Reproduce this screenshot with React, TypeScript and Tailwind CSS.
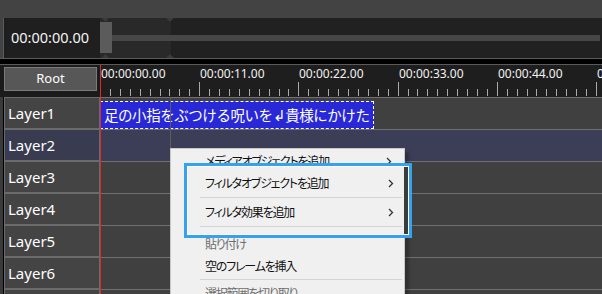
import * as React from "react";

const layers = ["Layer1", "Layer2", "Layer3", "Layer4", "Layer5", "Layer6", "Layer7"];
const labels = ["00:00:00.00", "00:00:11.00", "00:00:22.00", "00:00:33.00", "00:00:44.00", "00:00:55.00"];
const STEP = 99.2;

function Chevron() {
  return (
    <svg width="6" height="9" viewBox="0 0 6 9" className="shrink-0">
      <path d="M1 1 L4.5 4.5 L1 8" fill="none" stroke="#333" strokeWidth="1.3" />
    </svg>
  );
}

function MenuItem({ label, disabled, sub, h = "h-[24px]" }: { label: string; disabled?: boolean; sub?: boolean; h?: string }) {
  return (
    <div className={`flex ${h} items-center justify-between pl-[34px] pr-[12px]`}>
      <span className={disabled ? "text-[#6d6d6d]" : "text-[#111]"}>{label}</span>
      {sub && <Chevron />}
    </div>
  );
}

function TopPanel() {
  return (
    <div className="ml-[3px] flex h-[40px] border-l border-[#5a5a5a] bg-[#1f1f1f]">
      <div className="flex w-[96px] items-center pl-[7px] text-[14.5px] text-[#f4f4f4]">00:00:00.00</div>
      <div className="relative flex flex-1">
        <div className="w-[69px] rounded-r-[4px] bg-[#292929]" />
        <div className="w-[3px] bg-[#1f1f1f]" />
        <div className="flex-1 rounded-l-[4px] bg-[#212121]" />
        <svg className="absolute left-0 top-0" width="80" height="40" viewBox="0 0 80 40">
          <path d="M2 0 H9 L5.5 4 Z M2 40 H9 L5.5 36 Z" fill="#3a3a3a" />
          <path d="M66 0 H74 L70 4 Z M66 40 H74 L70 36 Z" fill="#3a3a3a" />
          <rect x="69.5" y="3" width="1" height="34" fill="#343434" />
        </svg>
        <div className="absolute left-[12px] right-[2px] top-[17px] h-[6px] bg-[#474747]" />
        <div className="absolute left-0 top-[4px] h-[31px] w-[12px] bg-[#5b5b5b]" />
      </div>
    </div>
  );
}

function Ruler() {
  const ticks = Array.from({ length: 51 }, (_, i) => i);
  return (
    <div className="relative flex-1 overflow-hidden bg-[#1e1e1e]">
      <svg className="absolute left-0 top-0" width="502" height="32" viewBox="0 0 502 32">
        {ticks.map((i) => {
          const x = Math.round(i * (STEP / 10)) + 0.5;
          const major = i % 10 === 0;
          return <line key={i} x1={x} x2={x} y1={major ? 17 : 24} y2={31} stroke="#a9a9a9" strokeWidth="1" />;
        })}
      </svg>
      {labels.map((l, i) => (
        <span
          key={l}
          className="absolute top-[2px] whitespace-nowrap text-[12px] leading-[14px] text-[#f2f2f2]"
          style={{ left: Math.round(i * STEP) + 1 }}
        >
          {l}
        </span>
      ))}
    </div>
  );
}

function LayerRow({ name, index }: { name: string; index: number }) {
  const selected = index === 1;
  return (
    <div className="flex h-[32px]">
      <div className="w-[4px] border-r border-black bg-[#3a3a3a]" />
      <div
        className={`flex w-[96px] items-center border border-[#6b6b6b] pl-[3px] text-[15px] text-white ${
          selected ? "bg-[#393c50]" : "bg-[#444444]"
        }`}
      >
        {name}
      </div>
      <div className={`relative flex-1 border-t border-[#707070] ${selected ? "bg-[#3b3e56]" : "bg-[#404040]"}`}>
        {index === 0 && (
          <div className="absolute left-0 top-[3px] flex h-[28px] w-[274px] items-center overflow-hidden whitespace-nowrap border border-dashed border-white bg-[#2828d6] pl-[3px] font-['Noto_Sans_CJK_JP',sans-serif] text-[14.5px] tracking-[-0.45px] text-white">
            足の小指をぶつける呪いを↲貴様にかけた
          </div>
        )}
      </div>
    </div>
  );
}

export default function App() {
  return (
    <div className="relative h-[294px] w-[602px] overflow-hidden bg-[#434343] font-['Noto_Sans','Noto_Sans_CJK_JP',sans-serif]">
      <div className="h-[18px]" />
      <TopPanel />
      <div className="h-[7px] border-y border-[#5a5a5a] bg-black" />
      <div className="flex h-[32px]">
        <div className="w-[100px] bg-[#1b1b1b] pl-[4px] pt-[2px]">
          <div className="flex h-[24px] w-[93px] items-center justify-center border border-[#7a7a7a] bg-[#575757] text-[13px] text-white">
            Root
          </div>
        </div>
        <Ruler />
      </div>
      {layers.map((n, i) => (
        <LayerRow key={n} name={n} index={i} />
      ))}

      <div className="absolute left-[170px] top-[97px] h-[51px] w-px bg-[#5c5c5c]" />
      <div className="absolute bottom-0 left-[100px] top-[65px] w-px bg-[#e02a2a]" />

      <div className="absolute left-[170px] top-[148px] w-[235px] border border-[#c8c8c8] bg-[#f0f0f0] font-['Noto_Sans_CJK_JP',sans-serif] text-[12px] tracking-[-1.2px] shadow-[4px_4px_3px_rgba(0,0,0,0.25)] [font-feature-settings:'palt']">
        <MenuItem label="メディアオブジェクトを追加" sub />
        <MenuItem label="フィルタオブジェクトを追加" sub />
        <MenuItem label="フィルタ効果を追加" sub />
        <div className="h-[12px]" />
        <MenuItem label="貼り付け" disabled h="h-[22px]" />
        <MenuItem label="空のフレームを挿入" h="h-[22px]" />
        <div className="flex h-[5px] items-center pl-[29px] pr-[2px]">
          <div className="h-px flex-1 bg-[#d4d4d4]" />
        </div>
        <MenuItem label="選択範囲を切り取り" disabled h="h-[22px]" />
      </div>

      <div className="absolute left-[184px] top-[163px] h-[75px] w-[228px] border-[3px] border-[#35a2ee] font-['Noto_Sans_CJK_JP',sans-serif] text-[12px] tracking-[-1.2px] [font-feature-settings:'palt']">
        <div className="flex h-full border border-white">
          <div className="flex flex-1 flex-col bg-[#f0f0f0] pt-[4px]">
            <div className="flex h-[24px] items-center justify-between pl-[17px] pr-[10px]">
              <span className="text-[#111]">フィルタオブジェクトを追加</span>
              <Chevron />
            </div>
            <div className="flex h-[5px] items-center pl-[12px] pr-[2px]">
              <div className="h-px flex-1 bg-[#d4d4d4]" />
            </div>
            <div className="flex h-[24px] items-center justify-between pl-[17px] pr-[10px]">
              <span className="text-[#111]">フィルタ効果を追加</span>
              <Chevron />
            </div>
            <div className="flex h-[5px] items-center pl-[12px] pr-[2px]">
              <div className="h-px flex-1 bg-[#d4d4d4]" />
            </div>
          </div>
          <div className="w-[4px] bg-[#3b3b3b]" />
        </div>
      </div>
    </div>
  );
}
